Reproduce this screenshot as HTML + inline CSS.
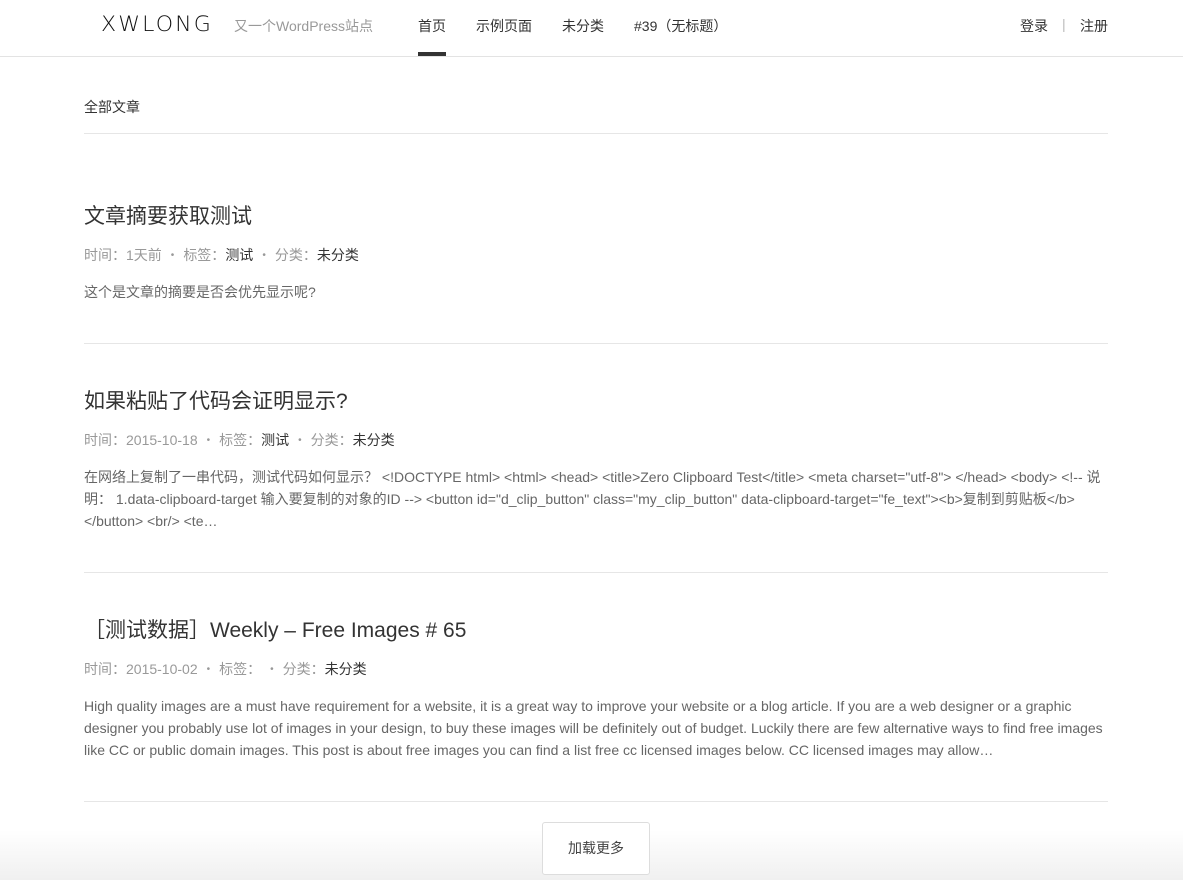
<!DOCTYPE html>
<html><head><meta charset="utf-8"><style>
*{margin:0;padding:0;box-sizing:border-box}
body{width:1183px;height:880px;overflow:hidden;background:#fff;font-family:"Liberation Sans","Noto Sans CJK SC",sans-serif;color:#333;position:relative}
.hd{height:57px;border-bottom:1px solid #e3e3e3;position:relative}
.logo{position:absolute;left:101px;top:12px;font-family:"DejaVu Sans",sans-serif;font-size:21px;letter-spacing:2px;color:#111;font-weight:300;transform:scaleX(1.05);transform-origin:left}
.desc{position:absolute;left:234px;top:16px;font-size:14px;color:#999}
.nav a{position:absolute;top:16px;font-size:14px;color:#333;text-decoration:none}
.ul{position:absolute;left:418px;top:52px;width:28px;height:4px;background:#333}
.r{position:absolute;top:16px;font-size:14px;color:#333}
.wrap{position:absolute;left:84px;width:1024px}
.cat{top:97px;font-size:14px;height:37px;border-bottom:1px solid #e6e6e6}
h2{font-size:21px;font-weight:normal;color:#333;position:absolute;left:0}
.meta{position:absolute;left:0;font-size:14px;color:#999}
.meta b{font-weight:normal;color:#333}
.meta i{font-style:normal;margin:0 9px;font-size:10px;vertical-align:2px}
.ex{position:absolute;left:0;width:1024px;font-size:14px;color:#666;line-height:22px}
.line{position:absolute;left:84px;width:1024px;height:1px;background:#e6e6e6}
.fade{position:absolute;left:0;top:830px;width:1183px;height:50px;background:linear-gradient(#fff,#f0f0f0)}
.btn{position:absolute;left:542px;top:822px;width:108px;height:53px;border:1px solid #ddd;border-radius:3px;background:#fff;font-size:14px;text-align:center;line-height:51px;color:#444}
</style></head><body>
<div class="hd">
<div class="logo">XWLONG</div>
<div class="desc">又一个WordPress站点</div>
<div class="nav"><a style="left:418px">首页</a><a style="left:476px">示例页面</a><a style="left:562px">未分类</a><a style="left:634px">#39（无标题）</a></div>
<div class="ul"></div>
<div class="r" style="left:1020px">登录</div><div class="r" style="left:1062px;color:#bbb">|</div><div class="r" style="left:1080px">注册</div>
</div>
<div class="wrap cat">全部文章</div>

<h2 style="left:84px;top:200px">文章摘要获取测试</h2>
<div class="meta" style="left:84px;top:245px">时间：1天前<i>•</i>标签：<b>测试</b><i>•</i>分类：<b>未分类</b></div>
<div class="ex" style="left:84px;top:281px">这个是文章的摘要是否会优先显示呢?</div>
<div class="line" style="top:343px"></div>

<h2 style="left:84px;top:385px">如果粘贴了代码会证明显示?</h2>
<div class="meta" style="left:84px;top:430px">时间：2015-10-18<i>•</i>标签：<b>测试</b><i>•</i>分类：<b>未分类</b></div>
<div class="ex" style="left:84px;top:466px">在网络上复制了一串代码，测试代码如何显示？ &lt;!DOCTYPE html&gt; &lt;html&gt; &lt;head&gt; &lt;title&gt;Zero Clipboard Test&lt;/title&gt; &lt;meta charset="utf-8"&gt; &lt;/head&gt; &lt;body&gt; &lt;!-- 说明： 1.data-clipboard-target 输入要复制的对象的ID --&gt; &lt;button id="d_clip_button" class="my_clip_button" data-clipboard-target="fe_text"&gt;&lt;b&gt;复制到剪贴板&lt;/b&gt; &lt;/button&gt; &lt;br/&gt; &lt;te…</div>
<div class="line" style="top:572px"></div>

<h2 style="left:84px;top:614px">［测试数据］Weekly – Free Images # 65</h2>
<div class="meta" style="left:84px;top:659px">时间：2015-10-02<i>•</i>标签：<i>•</i>分类：<b>未分类</b></div>
<div class="ex" style="left:84px;top:695px">High quality images are a must have requirement for a website, it is a great way to improve your website or a blog article. If you are a web designer or a graphic designer you probably use lot of images in your design, to buy these images will be definitely out of budget. Luckily there are few alternative ways to find free images like CC or public domain images. This post is about free images you can find a list free cc licensed images below. CC licensed images may allow…</div>
<div class="fade"></div>
<div class="line" style="top:801px"></div>
<div class="btn">加载更多</div>
</body></html>
